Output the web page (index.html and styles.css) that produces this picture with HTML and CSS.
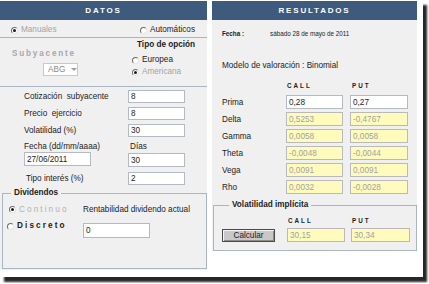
FILE: index.html
```html
<!DOCTYPE html>
<html lang="es">
<head>
    <meta charset="UTF-8">
    <title>Valoración de opciones</title>
    <link rel="stylesheet" href="styles.css">
</head>
<body>
    <div class="shot">
        <section class="panel datos">
            <h2 class="bar">DATOS</h2>

            <div class="modo">
                <span class="opt off"><span class="radio on"></span>Manuales</span>
                <span class="opt"><span class="radio"></span>Automáticos</span>
            </div>

            <div class="sub">
                <div class="sub-left">
                    <div class="spaced">Subyacente</div>
                    <span class="select">ABG<span class="arrow"></span></span>
                </div>
                <div class="tipo">
                    <div class="tipo-title">Tipo de opción</div>
                    <div class="opt tipo-opt"><span class="radio"></span>Europea</div>
                    <div class="opt tipo-opt off"><span class="radio on"></span>Americana</div>
                </div>
            </div>

            <div class="campos">
                <div class="row">
                    <span class="lbl">Cotización&nbsp; subyacente</span>
                    <input class="txt" type="text" value="8">
                </div>
                <div class="row">
                    <span class="lbl">Precio&nbsp; ejercicio</span>
                    <input class="txt" type="text" value="8">
                </div>
                <div class="row">
                    <span class="lbl">Volatilidad (%)</span>
                    <input class="txt" type="text" value="30">
                </div>
                <div class="row row-heads">
                    <span class="lbl">Fecha (dd/mm/aaaa)</span>
                    <span class="dias">Días</span>
                </div>
                <div class="row row-fecha">
                    <input class="txt fecha-in" type="text" value="27/06/2011">
                    <input class="txt dias-in" type="text" value="30">
                </div>
                <div class="row row-tipo">
                    <span class="lbl">Tipo interés (%)</span>
                    <input class="txt" type="text" value="2">
                </div>
            </div>

            <fieldset class="dividendos">
                <legend>Dividendos</legend>
                <div class="div-row">
                    <span class="radio on"></span>
                    <span class="spaced-lbl off">Continuo</span>
                    <span class="rent">Rentabilidad dividendo actual</span>
                </div>
                <div class="div-row discreto">
                    <span class="radio"></span>
                    <span class="spaced-lbl">Discreto</span>
                    <input class="txt div-in" type="text" value="0">
                </div>
            </fieldset>
        </section>

        <section class="panel resultados">
            <h2 class="bar">RESULTADOS</h2>

            <div class="fecha">
                <span class="fecha-lbl">Fecha :</span>
                <span>sábado 28 de mayo de 2011</span>
            </div>

            <div class="modelo">Modelo de valoración : Binomial</div>

            <div class="heads">
                <span class="h-call">CALL</span>
                <span class="h-put">PUT</span>
            </div>

            <div class="greek">
                <span class="g-lbl">Prima</span>
                <input class="txt g-call" type="text" value="0,28">
                <input class="txt g-put" type="text" value="0,27">
            </div>
            <div class="greek">
                <span class="g-lbl">Delta</span>
                <input class="txt out g-call" type="text" value="0,5253" readonly>
                <input class="txt out g-put" type="text" value="-0,4767" readonly>
            </div>
            <div class="greek">
                <span class="g-lbl">Gamma</span>
                <input class="txt out g-call" type="text" value="0,0058" readonly>
                <input class="txt out g-put" type="text" value="0,0058" readonly>
            </div>
            <div class="greek">
                <span class="g-lbl">Theta</span>
                <input class="txt out g-call" type="text" value="-0,0048" readonly>
                <input class="txt out g-put" type="text" value="-0,0044" readonly>
            </div>
            <div class="greek">
                <span class="g-lbl">Vega</span>
                <input class="txt out g-call" type="text" value="0,0091" readonly>
                <input class="txt out g-put" type="text" value="0,0091" readonly>
            </div>
            <div class="greek">
                <span class="g-lbl">Rho</span>
                <input class="txt out g-call" type="text" value="0,0032" readonly>
                <input class="txt out g-put" type="text" value="-0,0028" readonly>
            </div>

            <fieldset class="implicita">
                <legend>Volatilidad implícita</legend>
                <div class="heads imp-heads">
                    <span class="h-call">CALL</span>
                    <span class="h-put">PUT</span>
                </div>
                <div class="imp-row">
                    <button class="calc">Calcular</button>
                    <input class="txt out imp-call" type="text" value="30,15" readonly>
                    <input class="txt out imp-put" type="text" value="30,34" readonly>
                </div>
            </fieldset>
        </section>
    </div>
</body>
</html>
```

FILE: styles.css
```css
body {
    margin: 0;
    padding-bottom: 6px;
    background: #fff;
    font-family: "Liberation Sans", Arial, sans-serif;
    font-size: 8.2px;
    color: #1c1c1c;
}

.shot {
    width: 423px;
    height: 277px;
    box-sizing: border-box;
    padding-top: 1px;
    background: #fff;
    box-shadow: 4px 5px 2px #262626;
    display: flex;
    align-items: flex-start;
}

.panel {
    background: #f0f0f0;
}

.bar {
    margin: 0;
    height: 19px;
    background: #3e5a7c;
    color: #fff;
    font-size: 8px;
    font-weight: bold;
    line-height: 19px;
    letter-spacing: 1.8px;
    text-align: center;
}

/* radios */
.opt {
    display: flex;
    align-items: center;
    gap: 3px;
    line-height: 10px;
}
.off {
    color: #a3a3a3;
}
.radio {
    position: relative;
    width: 7px;
    height: 7px;
    box-sizing: border-box;
    border-radius: 50%;
    border: 1px solid;
    border-color: #6d6d6d #e4e4e4 #e4e4e4 #6d6d6d;
    background: #fff;
    flex: none;
}
.radio.on::after {
    content: "";
    position: absolute;
    left: 1px;
    top: 1px;
    width: 3px;
    height: 3px;
    border-radius: 50%;
    background: #1a1a1a;
}

/* DATOS */
.datos {
    width: 207px;
    height: 269px;
    display: flex;
    flex-direction: column;
}

.modo {
    height: 18px;
    box-sizing: border-box;
    padding: 3px 12px 0 11px;
    border-bottom: 1px solid #a9b5c5;
    display: flex;
    justify-content: space-between;
    align-items: center;
}

.sub {
    height: 49px;
    box-sizing: border-box;
    border-bottom: 1px solid #a9b5c5;
    display: flex;
}
.sub-left {
    width: 130px;
    box-sizing: border-box;
    padding: 11px 0 0 12px;
}
.spaced {
    color: #a8a8a8;
    font-weight: bold;
    letter-spacing: 1.8px;
    line-height: 10px;
}
.select {
    display: flex;
    align-items: center;
    width: 35px;
    height: 13px;
    box-sizing: border-box;
    margin: 4px 0 0 31px;
    padding-left: 4px;
    background: #fff;
    border: 1px solid #c9c9c9;
    color: #8a8a8a;
}
.arrow {
    margin-left: 6px;
    border-left: 3px solid transparent;
    border-right: 3px solid transparent;
    border-top: 3px solid #a0a0a0;
}
.tipo {
    padding: 2px 0 0 2px;
}
.tipo-title {
    margin-left: 5px;
    font-weight: bold;
    line-height: 10px;
}
.tipo-opt {
    margin-top: 5px;
}
.tipo-opt + .tipo-opt {
    margin-top: 2px;
}

/* campos */
.txt {
    font: inherit;
    color: #1c1c1c;
    height: 13px;
    width: 57px;
    box-sizing: border-box;
    margin: 0;
    padding: 0 2px;
    border: 1px solid #b3bac3;
    background: #fff;
    outline: none;
}
.row {
    display: flex;
    align-items: center;
    height: 13px;
    margin-top: 4px;
    padding-left: 24px;
}
.campos .row:first-child {
    margin-top: 3px;
}
.lbl {
    width: 84px;
    margin-right: 20px;
    white-space: nowrap;
}
.row-heads {
    height: 10px;
    margin-top: 5px;
    line-height: 10px;
}
.dias {
    margin-left: 2px;
}
.row-fecha {
    height: 15px;
    margin-top: 0;
    align-items: flex-start;
}
.fecha-in {
    width: 67px;
    height: 14px;
    margin-right: 37px;
}
.dias-in {
    height: 14px;
    margin-top: 1px;
}
.row-tipo {
    margin-top: 5px;
    padding-left: 26px;
}
.row-tipo .lbl {
    width: 82px;
}

/* dividendos */
.dividendos {
    flex: 1;
    margin: 3px 0 1px 2px;
    padding: 0;
    border: 1px solid #a9b5c5;
}
.dividendos legend {
    margin-left: 8px;
    padding: 0 3px;
    font-weight: bold;
    line-height: 10px;
}
.div-row {
    display: flex;
    align-items: center;
    height: 10px;
    margin-top: 6px;
    padding-left: 6px;
}
.spaced-lbl {
    width: 42px;
    margin-left: 3px;
    white-space: nowrap;
    letter-spacing: 2.1px;
    font-weight: bold;
}
.spaced-lbl.off {
    color: #b0b0b0;
    font-weight: normal;
}
.rent {
    width: 108px;
    margin-left: 22px;
    white-space: nowrap;
}
.discreto {
    height: 16px;
    margin-top: 7px;
    padding-left: 4px;
    align-items: flex-start;
}
.discreto .radio {
    margin-top: 2px;
}
.discreto .spaced-lbl {
    width: 47px;
    line-height: 10px;
}
.div-in {
    width: 67px;
    height: 15px;
    margin-left: 19px;
    margin-top: 2px;
}

/* RESULTADOS */
.resultados {
    width: 205px;
    margin-left: 5px;
}
.fecha {
    display: flex;
    padding: 10px 0 0 10px;
    font-size: 6.3px;
    line-height: 8px;
}
.fecha-lbl {
    width: 48px;
    font-weight: bold;
}
.modelo {
    margin-top: 23px;
    padding-left: 10px;
    line-height: 10px;
}
.heads {
    display: flex;
    margin-top: 11px;
    font-size: 6.3px;
    font-weight: bold;
    line-height: 8px;
    letter-spacing: 2px;
}
.h-call {
    margin-left: 75px;
    width: 65px;
}
.greek {
    display: flex;
    align-items: center;
    height: 14px;
    margin-top: 3px;
    padding-left: 10px;
}
.heads + .greek {
    margin-top: 5px;
}
.greek .txt {
    height: 14px;
}
.g-lbl {
    width: 64px;
}
.g-put {
    width: 58px;
    margin-left: 7px;
}
.txt.out {
    background: #fffbbd;
    border-color: #b9b9b9;
    color: #a2a2a2;
}

.implicita {
    margin: 6px 0 0 1px;
    padding: 0 0 8px;
    border: 1px solid #a9b5c5;
}
.implicita legend {
    margin-left: 15px;
    padding: 0 3px;
    font-weight: bold;
    line-height: 10px;
}
.imp-heads {
    margin-top: 7px;
}
.imp-heads .h-call {
    margin-left: 74px;
    width: 64px;
}
.imp-row {
    display: flex;
    align-items: center;
    height: 14px;
    margin-top: 3px;
    padding-left: 8px;
}
.calc {
    font: inherit;
    color: #1c1c1c;
    width: 53px;
    height: 13px;
    margin: 0;
    padding: 0;
    background: #c8c8c8;
    border: 1px solid #4a4a4a;
    box-shadow: inset 1px 1px 0 #f4f4f4, inset -1px -1px 0 #8c8c8c;
}
.imp-call {
    width: 58px;
    height: 14px;
    margin-left: 12px;
}
.imp-put {
    width: 59px;
    height: 14px;
    margin-left: 6px;
}
```
